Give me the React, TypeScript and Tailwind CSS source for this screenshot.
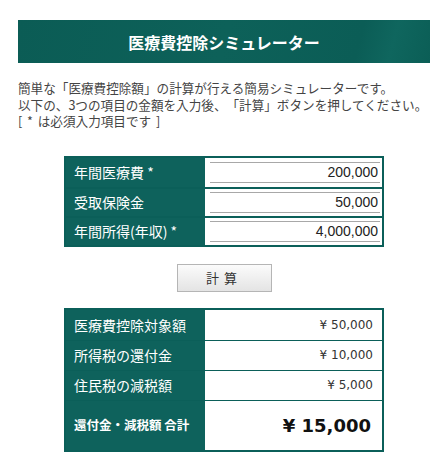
import React from 'react';

const inputs = [
  { label: '年間医療費 *', value: '200,000' },
  { label: '受取保険金', value: '50,000' },
  { label: '年間所得(年収) *', value: '4,000,000' },
];

const results = [
  { label: '医療費控除対象額', value: '¥ 50,000' },
  { label: '所得税の還付金', value: '¥ 10,000' },
  { label: '住民税の減税額', value: '¥ 5,000' },
];

function App() {
  return (
    <div className="min-h-screen w-[448px] bg-white font-['Noto_Sans_CJK_JP',sans-serif] text-[#333]">
      <div className="mx-[18px] pt-[20px]">
        {/* title bar */}
        <div className="flex h-[43px] items-center justify-center bg-[linear-gradient(105deg,#0b5c55_0%,#0d6159_50%,#0b5d56_82%,#0f665e_90%,#0b5e56_100%)]">
          <h1 className="text-[16px] font-bold leading-none text-white">医療費控除シミュレーター</h1>
        </div>

        <div className="mt-[17px] whitespace-nowrap text-[12.6px] leading-[16.5px] text-[#444] [text-spacing-trim:space-all]">
          <p>簡単な「医療費控除額」の計算が行える簡易シミュレーターです。</p>
          <p>以下の、3つの項目の金額を入力後、「計算」ボタンを押してください。</p>
          <p className="[word-spacing:2px]">[ * は必須入力項目です ]</p>
        </div>

        {/* input table */}
        <div className="mx-auto mt-[26px] w-[320px] border-2 border-[#0b5f59]">
          {inputs.map((row, i) => (
            <div key={row.label} className={`flex h-[29px] ${i > 0 ? 'border-t-2 border-[#0b5f59]' : ''}`}>
              <div className="flex w-[139px] items-center bg-[#0e625c] pl-[8px] text-[14px] leading-none text-white">
                {row.label}
              </div>
              <div className="flex flex-1 items-center bg-white pl-[5px] pr-[2px]">
                <input
                  readOnly
                  value={row.value}
                  className="h-[21px] w-full border-y border-[#a8a8a8] bg-white pr-[2px] text-right font-['Liberation_Sans',Arial,sans-serif] text-[14px] text-[#222] outline-none"
                />
              </div>
            </div>
          ))}
        </div>

        <div className="mt-[17px] flex justify-center">
          <button className="h-[28px] w-[95px] border border-[#b5b5b5] bg-[linear-gradient(#fbfbfb,#e4e4e4)] text-[13px] tracking-[5px] text-[#333]">
            計算
          </button>
        </div>

        {/* result table */}
        <div className="mx-auto mt-[16px] w-[320px] border-2 border-[#0b5f59]">
          {results.map((row, i) => (
            <div key={row.label} className={`flex h-[30px] ${i > 0 ? 'border-t-[1.5px] border-[#0b5f59]' : ''}`}>
              <div className="flex w-[139px] items-center bg-[#0e625c] pl-[8px] text-[14px] leading-none text-white">
                {row.label}
              </div>
              <div className="flex flex-1 items-center justify-end bg-white pr-[9px] font-['DejaVu_Sans',Verdana,sans-serif] text-[12px] text-[#333]">
                {row.value}
              </div>
            </div>
          ))}
          <div className="flex h-[50px] border-t-[1.5px] border-[#0b5f59]">
            <div className="flex w-[139px] items-center bg-[#0e625c] pl-[8px] text-[12.5px] font-bold leading-none text-white">
              還付金・減税額 合計
            </div>
            <div className="flex flex-1 items-center justify-end bg-white pr-[11px] font-['DejaVu_Sans',Verdana,sans-serif] text-[18px] font-bold text-[#111]">
              ¥ 15,000
            </div>
          </div>
        </div>
      </div>
    </div>
  );
}

export default App;
